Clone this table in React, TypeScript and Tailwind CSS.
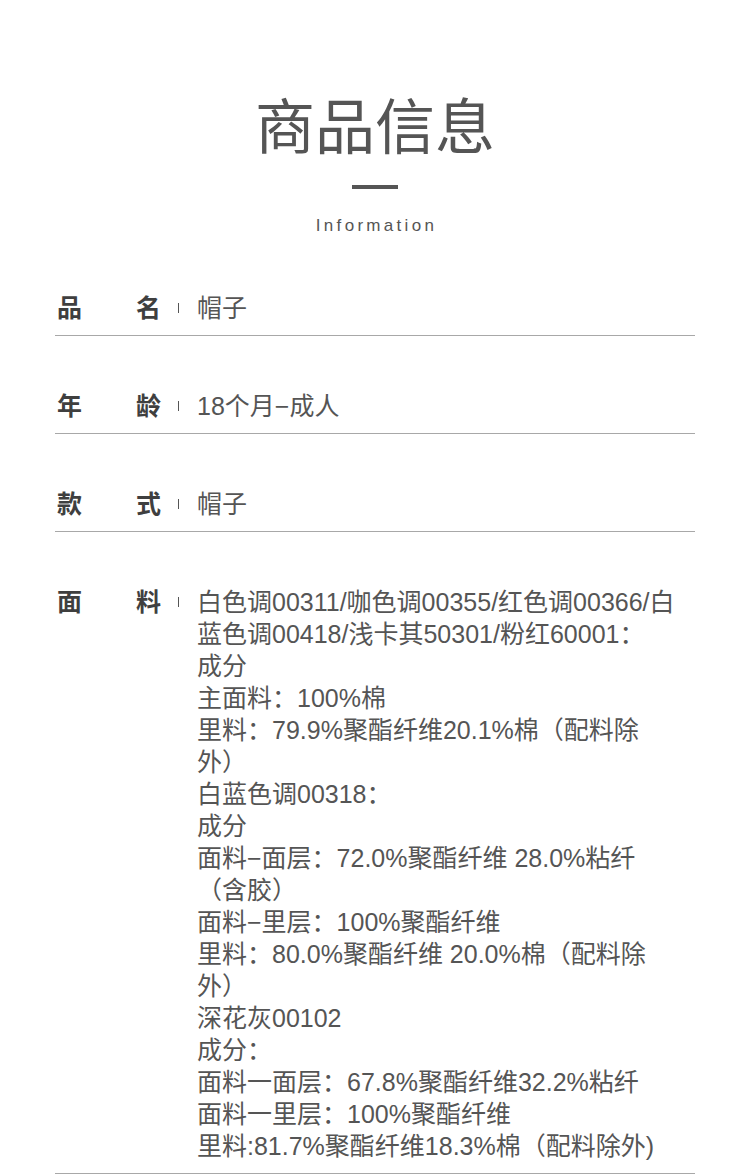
const FONT = '"Liberation Sans", "Noto Sans CJK SC", sans-serif';

interface InfoRow {
  label: [string, string];
  lines: string[];
}

const ROWS: InfoRow[] = [
  { label: ['品', '名'], lines: ['帽子'] },
  { label: ['年', '龄'], lines: ['18个月−成人'] },
  { label: ['款', '式'], lines: ['帽子'] },
  {
    label: ['面', '料'],
    lines: [
      '白色调00311/咖色调00355/红色调00366/白',
      '蓝色调00418/浅卡其50301/粉红60001：',
      '成分',
      '主面料：100%棉',
      '里料：79.9%聚酯纤维20.1%棉（配料除',
      '外）',
      '白蓝色调00318：',
      '成分',
      '面料−面层：72.0%聚酯纤维 28.0%粘纤',
      '（含胶）',
      '面料−里层：100%聚酯纤维',
      '里料：80.0%聚酯纤维 20.0%棉（配料除',
      '外）',
      '深花灰00102',
      '成分：',
      '面料一面层：67.8%聚酯纤维32.2%粘纤',
      '面料一里层：100%聚酯纤维',
      '里料:81.7%聚酯纤维18.3%棉（配料除外)',
    ],
  },
];

function Row({ row }: { row: InfoRow }) {
  return (
    <div className="flex items-start border-b border-[#a8a8a8] pt-[54px] pb-[11px]">
      <div className="ml-[2px] flex w-[104px] shrink-0 justify-between text-[25px] font-bold leading-[32px] text-[#3f3f3f]">
        <span>{row.label[0]}</span>
        <span>{row.label[1]}</span>
      </div>
      <div className="flex h-[32px] w-[36px] shrink-0 items-center pl-[17px]">
        <div className="h-[10px] w-px bg-[#555]" />
      </div>
      <div className="flex flex-col text-[25px] leading-[32px] text-[#555]">
        {row.lines.map((line, i) => (
          <div key={i} className="whitespace-nowrap">
            {line}
          </div>
        ))}
      </div>
    </div>
  );
}

export default function App() {
  return (
    <div className="min-h-[1174px] w-[750px] bg-white" style={{ fontFamily: FONT }}>
      <div className="flex flex-col items-center pt-[93px]">
        <h1 className="text-[60px] font-normal leading-[72px] text-[#555]">商品信息</h1>
        <div className="mt-[20px] h-[4px] w-[46px] bg-[#555]" />
        <div className="mt-[25px] pl-[3px] text-[17px] leading-[24px] tracking-[3.3px] text-[#555]">Information</div>
      </div>
      <div className="mx-[55px] flex flex-col">
        {ROWS.map((row, i) => (
          <Row key={i} row={row} />
        ))}
      </div>
    </div>
  );
}
